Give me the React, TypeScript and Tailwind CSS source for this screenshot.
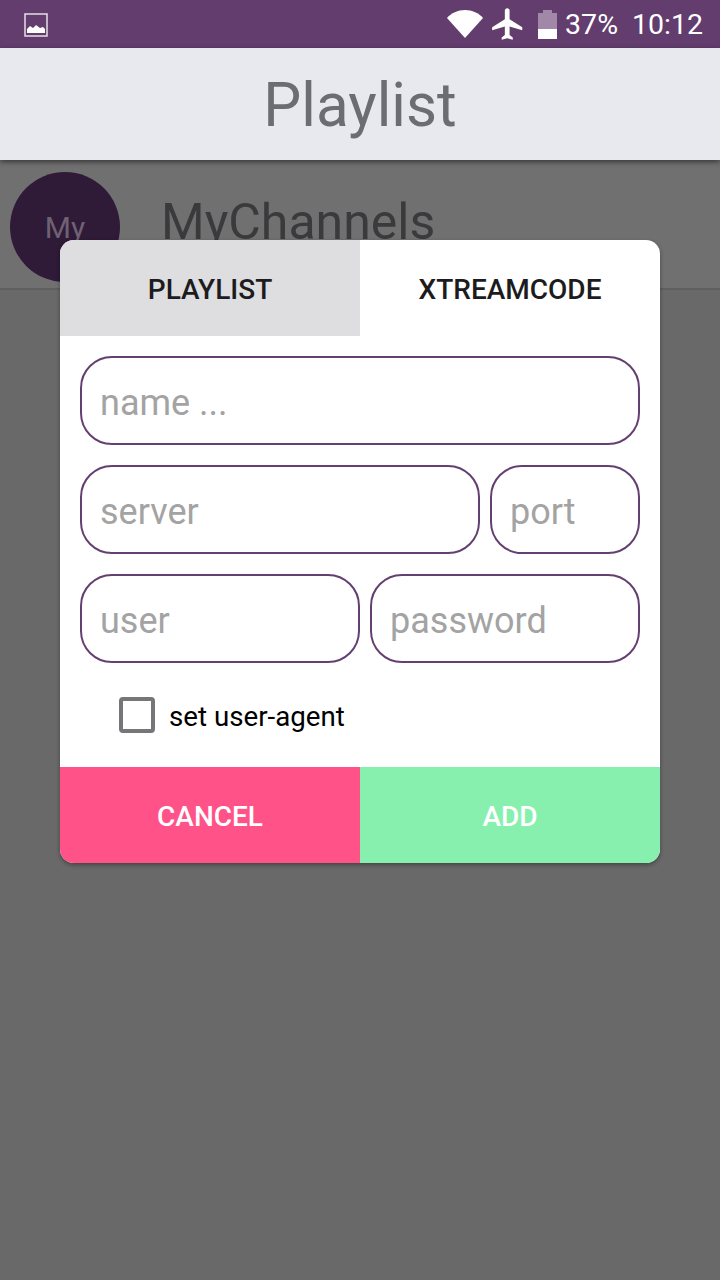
import { useState } from 'react';

function Field({ placeholder, className }: { placeholder: string; className: string }) {
  return (
    <div className={`h-[89px] rounded-[32px] border-2 border-[#643f70] bg-white flex items-center px-[18px] ${className}`}>
      <span className="text-[36px] leading-none text-[#a3a3a3] mt-[4px]">{placeholder}</span>
    </div>
  );
}

function StatusBar() {
  return (
    <div className="h-12 bg-[#623d6d] flex items-center pl-6 pr-[17px] text-white shrink-0">
      <svg width="24" height="24" viewBox="0 0 24 24" className="mt-[1px]">
        <rect x="1" y="1" width="22" height="22" fill="none" stroke="#e6e0e8" strokeWidth="1.500" />
        <path d="M3 20v-4l3-3 3 2 3-3 4 3 3-1 2 2v4z" fill="#fff" />
      </svg>
      <div className="ml-auto flex items-center">
        <svg width="36" height="28" viewBox="0 0 36 28" className="mr-[6px]">
          <path d="M0 8C4 3 11 0 18 0s14 3 18 8L18 28z" fill="#fff" />
        </svg>
        <svg width="38" height="38" viewBox="0 0 24 24" className="mr-[11px]">
          <path d="M21 16v-2l-8-5V3.500C13 2.670 12.330 2 11.500 2S10 2.670 10 3.500V9l-8 5v2l8-2.500V19l-2 1.500V22l3.500-1 3.500 1v-1.500L13 19v-5.500z" fill="#fff" />
        </svg>
        <div className="w-[19px] h-[29px] flex flex-col items-center mr-[8px]">
          <div className="w-[9px] h-[3px] bg-[#a188a9]" />
          <div className="w-full h-[16px] bg-[#a188a9]" />
          <div className="w-full h-[10px] bg-white" />
        </div>
        <span className="text-[28.5px] leading-none mr-[14px] mt-[3px]">37%</span>
        <span className="text-[28.5px] leading-none mt-[3px]">10:12</span>
      </div>
    </div>
  );
}

export default function App() {
  const [tab] = useState('xtream');

  return (
    <div className="relative w-[720px] h-[1280px] overflow-hidden bg-[#69696a] font-['Roboto',sans-serif]">
      <div className="flex flex-col h-full">
        <StatusBar />
        <div className="h-[112px] bg-[#e8e8ef] flex items-center justify-center shrink-0 shadow-[0_2px_5px_rgba(0,0,0,0.5)] z-10">
          <span className="text-[60.2px] leading-none text-[#6c6d72] mt-[4px]">Playlist</span>
        </div>
        <div className="h-[130px] bg-[#717071] border-b-2 border-[#5f5f60] flex items-center pl-[10px] shrink-0">
          <div className="w-[110px] h-[110px] rounded-full bg-[#2f1a38] flex items-center justify-center mt-[5px]">
            <span className="text-[30px] leading-none text-[#6f6174] mt-[2px]">My</span>
          </div>
          <span className="ml-[41px] text-[50px] leading-none text-[#3a393b] mt-[-5px]">MyChannels</span>
        </div>
      </div>

      <div className="absolute left-[60px] top-[240px] w-[600px] h-[623px] bg-white rounded-[14px] overflow-hidden flex flex-col shadow-[0_2px_4px_rgba(0,0,0,0.35)]">
        <div className="flex h-[96px] shrink-0">
          <div className={`w-[300px] flex items-center justify-center text-[28px] font-medium text-[#1c1b1d] pt-[4px] ${tab === 'xtream' ? 'bg-[#dedde0]' : ''}`}>
            PLAYLIST
          </div>
          <div className="w-[300px] flex items-center justify-center text-[28px] font-medium text-[#1c1b1d] pt-[4px]">
            XTREAMCODE
          </div>
        </div>

        <div className="flex flex-col gap-5 pt-5 px-5">
          <Field placeholder="name ..." className="w-full" />
          <div className="flex gap-[10px]">
            <Field placeholder="server" className="w-[400px]" />
            <Field placeholder="port" className="flex-1" />
          </div>
          <div className="flex gap-[10px]">
            <Field placeholder="user" className="w-[280px]" />
            <Field placeholder="password" className="flex-1" />
          </div>
        </div>

        <div className="flex items-center pl-[59px] mt-[34px]">
          <div className="w-[36px] h-[36px] rounded-[4px] border-[4px] border-[#767578] bg-white" />
          <span className="ml-[14px] text-[27.7px] leading-none text-black mt-[4px]">set user-agent</span>
        </div>

        <div className="mt-auto flex h-[96px] shrink-0 text-[28px] font-medium text-white">
          <div className="w-[300px] bg-[#ff5288] flex items-center justify-center pt-[4px]">CANCEL</div>
          <div className="w-[300px] bg-[#88f0ae] flex items-center justify-center pt-[4px]">ADD</div>
        </div>
      </div>
    </div>
  );
}
